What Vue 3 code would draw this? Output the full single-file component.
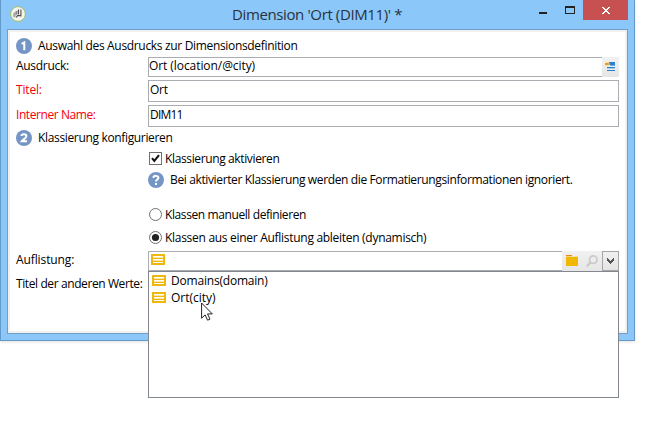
<script setup>
const options = ['Domains(domain)', 'Ort(city)']
</script>

<template>
  <div class="desktop">
    <section class="window">
      <header class="titlebar">
        <svg class="app-icon" viewBox="0 0 16 16">
          <circle cx="8" cy="8" r="7.4" fill="#f4f5ef" stroke="#9cbf62" />
          <path d="M3.2 7.5 5.5 5.5v6l-2.3-.6z" fill="#a6a6a2" />
          <path d="M5.5 5.5 7.5 4.5v3.5l-2 1.5z" fill="#8a8a88" />
          <path d="M8.5 3.5v5M10.9 3.5v7M6.3 11.5 7.5 9.6h3.4" stroke="#4d4d4d" stroke-width="1.1" fill="none" />
        </svg>
        <h1 class="title">Dimension 'Ort (DIM11)' *</h1>
        <div class="controls">
          <svg width="45" height="20" viewBox="0 0 45 20" shape-rendering="crispEdges">
            <path d="M1 12h8v2h-8z" fill="#222" />
            <path fill-rule="evenodd" d="M27 6h10v8h-10zM28 8v5h8v-5z" fill="#222" />
          </svg>
          <div class="close">
            <svg width="8" height="7" viewBox="0 0 8 7" shape-rendering="crispEdges">
              <path d="M0 0h2v1h1v1h2v-1h1v-1h2v1h-1v1h-1v1h-1v1h1v1h1v1h1v1h-2v-1h-1v-1h-2v1h-1v1h-2v-1h1v-1h1v-1h1v-1h-1v-1h-1v-1h-1z" fill="#fff" />
            </svg>
          </div>
        </div>
      </header>

      <main class="client">
        <div class="row section">
          <svg class="badge" viewBox="0 0 16 16"><circle cx="8" cy="8" r="8" /><path d="M5.6 5.9 8.3 4.4v7.8" /></svg>
          <span class="t s1">Auswahl des Ausdrucks zur Dimensionsdefinition</span>
        </div>

        <div class="row">
          <label><span class="t ausdruck">Ausdruck:</span></label>
          <div class="field slim">
            <span class="t expr">Ort (location/@city)</span>
            <div class="tool edit">
              <svg width="10" height="9" viewBox="0 0 10 9" shape-rendering="crispEdges">
                <path d="M4 0h6v3h-6z" fill="#2a82cf" /><path d="M5 3h5v1h-5z" fill="#71addf" />
                <path d="M1 0h3v4h-3z" fill="#fbdc92" /><path d="M0 1h3v2h-3z" fill="#f29a1c" /><path d="M3 1h2v2h-2z" fill="#d9a95c" />
                <path d="M2 5h8v1h-8zM2 8h8v1h-8z" fill="#2a82cf" /><path d="M2 6h8v1h-8z" fill="#a6cbec" />
              </svg>
            </div>
          </div>
        </div>

        <div class="row">
          <label class="required"><span class="t titel">Titel:</span></label>
          <div class="field"><span class="t ort">Ort</span></div>
        </div>

        <div class="row">
          <label class="required"><span class="t intern">Interner Name:</span></label>
          <div class="field"><span class="t dim">DIM11</span></div>
        </div>

        <div class="row section">
          <svg class="badge" viewBox="0 0 16 16"><circle cx="8" cy="8" r="8" /><path d="M5.4 6C5.6 3.6 10.4 3.6 10.4 6.2 10.4 8 7 9.6 5.8 11.2H11" /></svg>
          <span class="t s2">Klassierung konfigurieren</span>
        </div>

        <div class="row option">
          <svg class="mark" viewBox="0 0 13 13"><rect x=".5" y=".5" width="12" height="12" fill="#fff" stroke="#707070" /><path d="M3 6.2 5.3 9 10 3.2" fill="none" stroke="#111" stroke-width="2" /></svg>
          <span class="t akt">Klassierung aktivieren</span>
        </div>

        <div class="row info">
          <svg class="badge" viewBox="0 0 16 16"><circle cx="8" cy="8" r="8" /><path d="M5.4 5.8C5.6 3.2 10.6 3.2 10.4 6 10.3 7.6 8 7.6 8 9.6M8 11v2" /></svg>
          <span class="t bei">Bei aktivierter Klassierung werden die Formatierungsinformationen ignoriert.</span>
        </div>

        <div class="row option">
          <svg class="mark" viewBox="0 0 13 13"><circle cx="6.5" cy="6.5" r="6" fill="#fff" stroke="#707070" /></svg>
          <span class="t man">Klassen manuell definieren</span>
        </div>

        <div class="row option">
          <svg class="mark" viewBox="0 0 13 13"><circle cx="6.5" cy="6.5" r="6" fill="#fff" stroke="#707070" /><circle cx="6.5" cy="6.5" r="3.6" fill="#222" /></svg>
          <span class="t dyn">Klassen aus einer Auflistung ableiten (dynamisch)</span>
        </div>

        <div class="row">
          <label><span class="t aufl">Auflistung:</span></label>
          <div class="field slim combo">
            <svg class="list-icon" viewBox="0 0 14 11" shape-rendering="crispEdges"><path d="M0 0h14v11h-14z" fill="#efb810" /><path d="M2 2h10v1h-10zM2 5h10v1h-10zM2 8h10v1h-10z" fill="#fff" /><path d="M2 3h10v1h-10zM2 6h10v1h-10z" fill="#fbe6a4" /></svg>
            <div class="tool folder">
              <svg width="12" height="11" viewBox="0 0 12 11" shape-rendering="crispEdges"><path d="M0 0h6v1h-6z" fill="#e78a1c" /><path d="M0 1h6v1h6v9h-12z" fill="#f0b800" /><path d="M0 1h6v1h-6z" fill="#f7cf8c" /><path d="M7 1h5v1h-5z" fill="#f9e08c" /></svg>
            </div>
            <div class="tool search">
              <svg width="12" height="12" viewBox="0 0 12 12"><circle cx="7.3" cy="4.7" r="3.8" fill="none" stroke="#cacaca" stroke-width="1.7" /><path d="M4.6 7.4 .8 11.2" stroke="#cacaca" stroke-width="2.2" /></svg>
            </div>
            <div class="arrow">
              <svg width="7" height="6" viewBox="0 0 7 6" shape-rendering="crispEdges"><path d="M0 0h1v1h1v1h1v1h1v-1h1v-1h1v-1h1v3h-1v1h-1v1h-1v1h-1v-1h-1v-1h-1v-1h-1z" fill="#555" /></svg>
            </div>
          </div>
        </div>

        <div class="row">
          <label><span class="t other">Titel der anderen Werte:</span></label>
        </div>
      </main>
    </section>

    <ul class="dropdown">
      <li v-for="(o, i) in options" :key="o">
        <svg class="list-icon" viewBox="0 0 14 11" shape-rendering="crispEdges"><path d="M0 0h14v11h-14z" fill="#efb810" /><path d="M2 2h10v1h-10zM2 5h10v1h-10zM2 8h10v1h-10z" fill="#fff" /><path d="M2 3h10v1h-10zM2 6h10v1h-10z" fill="#fbe6a4" /></svg>
        <span :class="'opt' + i">{{ o }}</span>
      </li>
    </ul>

    <svg class="cursor" viewBox="0 0 12 19"><path d="M.6 1v15.2l3.5-3.3 2.5 5.3 2.4-1.1-2.5-5.2h4.8z" fill="#fff" stroke="#222" /></svg>
  </div>
</template>

<style>
body { background: #fff; }
</style>

<style scoped>
.desktop { position: relative; width: 656px; height: 436px; overflow: hidden; background: #fff; font: 12px/16px "Open Sans", "Noto Sans", sans-serif; color: #000; }
.desktop * { box-sizing: border-box; }
svg { display: block; flex: none; }
.t { display: block; padding-top: 1px; white-space: pre; }
.window { width: 635px; height: 341px; border: 1px solid #6499c8; border-top: 0; background: #8cc7fa; padding: 0 6px 7px; box-shadow: 0 1px 3px rgba(0,0,0,.12); }
.titlebar { display: flex; height: 29px; align-items: flex-start; justify-content: space-between; }
.app-icon { width: 16px; height: 16px; margin: 6px 0 0 3px; }
.title { margin: 3px 0 0 206px; font-size: 15px; line-height: 22px; font-weight: 400; color: #28323d; flex: 1; letter-spacing: -.38px; }
.controls { display: flex; }
.close { width: 45px; height: 20px; background: #c75050; padding: 7px 0 0 19px; }
.client { height: 305px; border: 1px solid #6f9fc9; background: #fff; box-shadow: inset 0 0 0 2px #f0f0f0; padding: 7px 8px 0; display: grid; grid-template-rows: 20px 23px 25px 24px 21px 21px 35px 23px 22px 24px 16px; }
.row { display: flex; align-items: flex-start; }
label { width: 132px; flex: none; }
.required { color: #f5000c; padding-top: 1px; }
.section, .info { gap: 6px; }
.badge { width: 16px; height: 16px; margin-top: 1px; }
.badge circle { fill: #7595c6; }
.badge path { fill: none; stroke: #fff; stroke-width: 2; }
.info { padding-left: 132px; }
.option { padding-left: 133px; gap: 3px; }
.mark { width: 13px; height: 13px; margin-top: 2px; }
.field { width: 471px; height: 22px; border: 1px solid #abadb3; display: flex; align-items: flex-start; padding-left: 1px; }
.slim { height: 20px; padding-left: 0; line-height: 14px; }
.tool { height: 20px; margin-top: -1px; background: linear-gradient(#f1f1f1, #e6e6e6); }
.edit { width: 17px; margin-left: auto; margin-right: -1px; padding: 5px 0 0 3px; }
.folder { width: 20px; margin-left: auto; padding: 4px 0 0 4px; }
.search { width: 20px; padding: 4px 0 0 4px; }
.arrow { width: 17px; height: 20px; margin: -1px -1px 0 0; border: 1px solid #a5a5a5; background: linear-gradient(#f0f0f0, #e5e5e5); padding: 6px 0 0 4px; }
.list-icon { width: 14px; height: 11px; }
.combo .list-icon { margin: 2px 0 0 2px; }
.dropdown { position: absolute; left: 148px; top: 271px; width: 471px; height: 127px; margin: 0; padding: 1px 3px; list-style: none; border: 1px solid #828790; background: #fff; }
.dropdown li { display: flex; gap: 5px; height: 17px; align-items: flex-start; }
.dropdown .list-icon { margin-top: 2px; }
.cursor { position: absolute; left: 201px; top: 302px; width: 12px; height: 19px; }
.s1 { letter-spacing: -.33px; }
.ausdruck { letter-spacing: -.3px; }
.expr { letter-spacing: -.07px; }
.titel { letter-spacing: -.17px; }
.ort { letter-spacing: -.3px; }
.intern { letter-spacing: -.43px; }
.dim { letter-spacing: -.82px; }
.s2 { letter-spacing: -.34px; }
.akt { letter-spacing: -.37px; }
.bei { letter-spacing: -.367px; }
.man { letter-spacing: -.4px; }
.dyn { letter-spacing: -.29px; }
.aufl { letter-spacing: -.1px; }
.other { letter-spacing: -.4px; }
.opt0 { letter-spacing: -.2px; }
</style>
